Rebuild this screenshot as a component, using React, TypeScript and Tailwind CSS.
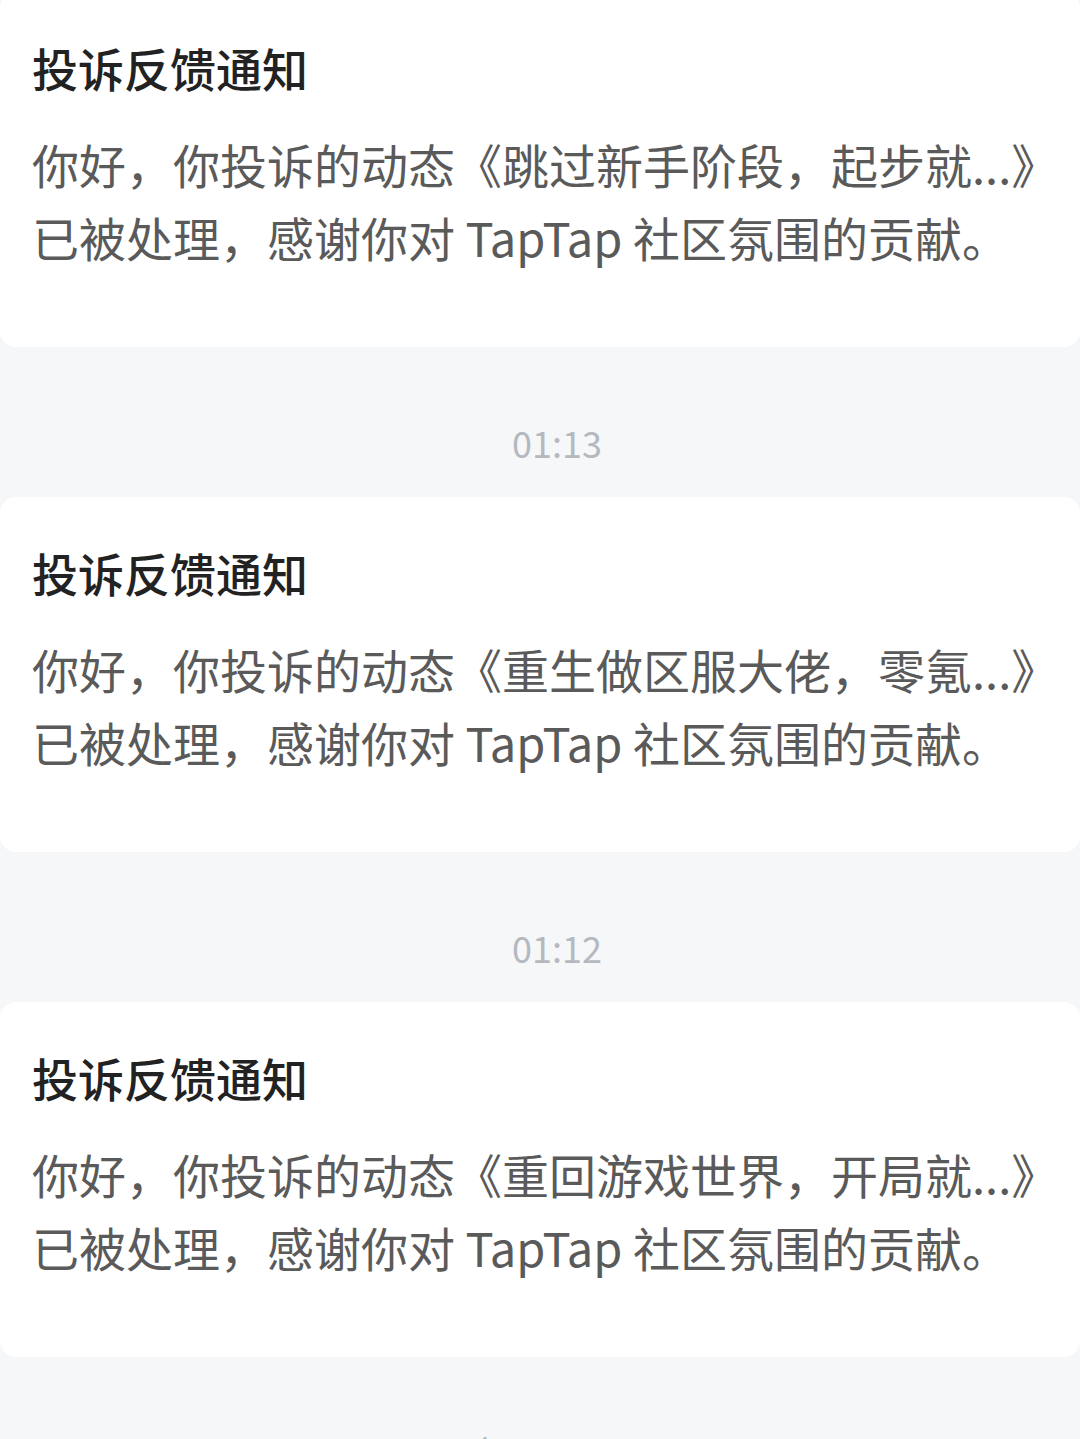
import React from 'react';

type Notice = {
  title: string;
  post: string;
};

const notices: Notice[] = [
  { title: '投诉反馈通知', post: '跳过新手阶段，起步就...' },
  { title: '投诉反馈通知', post: '重生做区服大佬，零氪...' },
  { title: '投诉反馈通知', post: '重回游戏世界，开局就...' },
];

const times = ['01:13', '01:12', '2023年6月1日 00:11'];

const NoticeCard: React.FC<{ notice: Notice }> = ({ notice }) => (
  <div className="bg-white rounded-[16px] px-[32px] pt-[46px] pb-[74px]">
    <div className="text-[46px] leading-[58px] font-medium text-[#222222] whitespace-nowrap">
      {notice.title}
    </div>
    <div className="mt-[31px] text-[47px] leading-[73px] text-[#5a5a5a] whitespace-nowrap">
      <div>你好，你投诉的动态《{notice.post}》</div>
      <div>已被处理，感谢你对 TapTap 社区氛围的贡献。</div>
    </div>
  </div>
);

const TimeLabel: React.FC<{ text: string }> = ({ text }) => (
  <div className="pt-[77px] pb-[37px] pl-[34px] text-center text-[36px] leading-[36px] text-[#b4b9c0]">
    {text}
  </div>
);

export default function App() {
  return (
    <div
      className="min-h-[1439px] h-[1439px] overflow-hidden bg-[#f6f7f9]"
      style={{ fontFamily: '"Noto Sans CJK SC", "Noto Sans", sans-serif' }}
    >
      <div className="-mt-[8px] flex flex-col">
        {notices.map((n, i) => (
          <React.Fragment key={i}>
            <NoticeCard notice={n} />
            <TimeLabel text={times[i]} />
          </React.Fragment>
        ))}
      </div>
    </div>
  );
}
